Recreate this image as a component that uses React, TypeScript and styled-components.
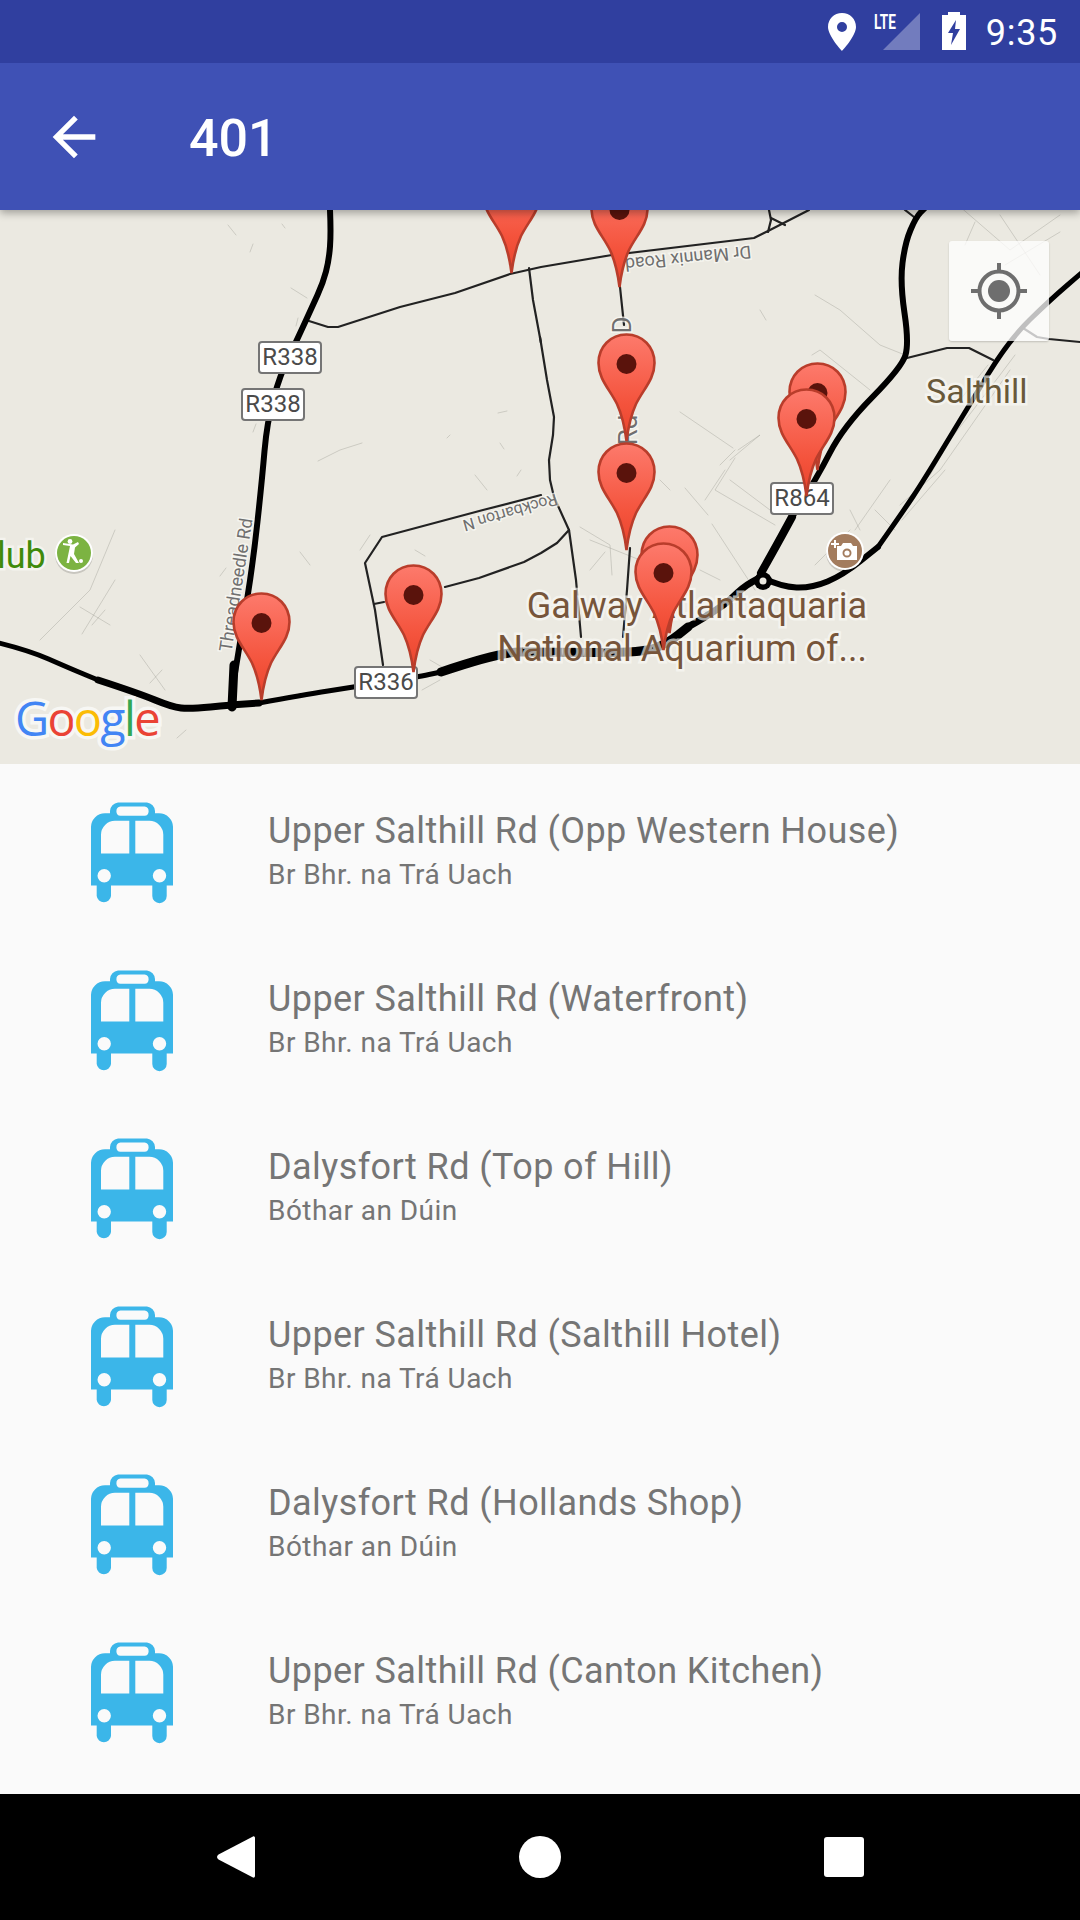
import React from 'react';
import styled, { createGlobalStyle } from 'styled-components';

const Global = createGlobalStyle`
  html, body { margin: 0; padding: 0; background: #fafafa; }
  body { font-family: Roboto, "Liberation Sans", sans-serif; }
  * { box-sizing: border-box; }
`;

const Screen = styled.div`
  width: 1080px; height: 1920px; display: flex; flex-direction: column; overflow: hidden; background: #fafafa;
`;
const StatusBar = styled.div`
  height: 63px; flex: none; background: #303f9f; display: flex; align-items: flex-start; justify-content: flex-end;
  padding: 12px 22px 0 0; color: #fff; position: relative; z-index: 3;
`;
const LocationIcon = styled.svg`width: 28px; height: 38px; margin: 1px 18px 0 0;`;
const SignalBox = styled.div`position: relative; width: 46px; height: 38px; margin: 1px 22px 0 0;`;
const SignalIcon = styled.svg`display: block; width: 46px; height: 38px;`;
const LteText = styled.span`
  position: absolute; left: 0; top: 1px; font: 700 20px/16px Roboto, sans-serif; color: #fff;
  transform: scaleX(.68); transform-origin: 0 0; letter-spacing: 0;
`;
const BatteryIcon = styled.svg`width: 24px; height: 38px; margin: 0 20px 0 0;`;
const Clock = styled.span`font: 400 36px/38px Roboto, sans-serif; margin-top: 2px; letter-spacing: .7px;`;

const AppBar = styled.header`
  height: 147px; flex: none; background: #3f51b5; display: flex; align-items: center; color: #fff;
  position: relative; z-index: 2; box-shadow: 0 3px 8px rgba(0,0,0,.32);
`;
const BackButton = styled.svg`width: 64px; height: 64px; margin-left: 42px; flex: none; fill: #fff;`;
const AppTitle = styled.h1`margin: 5px 0 0 83px; font: 500 52px/64px Roboto, sans-serif;`;

const MapView = styled.section`
  height: 554px; flex: none; position: relative; overflow: hidden; background: #ebe9e1;
`;
const Roads = styled.svg`position: absolute; left: 0; top: 0; width: 1080px; height: 554px;`;

const at = (p: { $x: number; $y: number }) => `left: ${p.$x}px; top: ${p.$y - 210}px;`;

const Shield = styled.div<{ $x: number; $y: number }>`
  position: absolute; ${at}; width: 64px; height: 33px; background: #fff; border: 2px solid #757575; border-radius: 4px;
  font: 400 24px/29px Roboto, sans-serif; color: #4a4a4a; text-align: center;
`;
const PlaceLabel = styled.div<{ $x: number; $y: number; $size: number; $color: string }>`
  position: absolute; ${at}; font: 400 ${p => p.$size}px/43px Roboto, sans-serif; color: ${p => p.$color};
  white-space: nowrap; -webkit-text-stroke: 5px rgba(250,249,245,.68); paint-order: stroke fill;
`;
const PoiBlock = styled.div`
  position: absolute; left: 467px; top: 375px; width: 400px; text-align: right;
  font: 400 36px/43px Roboto, sans-serif; color: #77553a; white-space: nowrap;
  -webkit-text-stroke: 5px rgba(250,249,245,.68); paint-order: stroke fill;
`;
const StreetLabel = styled.div<{ $x: number; $y: number; $rot: number; $size: number }>`
  position: absolute; ${at}; font: 400 ${p => p.$size}px/20px Roboto, sans-serif; color: #6f6f6f; white-space: nowrap;
  transform: translate(-50%, -50%) rotate(${p => p.$rot}deg);
  -webkit-text-stroke: 3px rgba(250,249,245,.7); paint-order: stroke fill;
`;
const PinSvg = styled.svg<{ $x: number; $y: number }>`
  position: absolute; ${at}; width: 59px; height: 108px; margin-left: -30.5px; overflow: visible;
`;
const PoiDot = styled.svg<{ $x: number; $y: number }>`
  position: absolute; ${at}; width: 40px; height: 42px;
`;
const GoogleLogo = styled.div`
  position: absolute; left: 15px; top: 480px; font: 500 47px/56px "Open Sans", Roboto, sans-serif; letter-spacing: -1.8px;
  -webkit-text-stroke: 7px rgba(250,250,248,.85); paint-order: stroke fill; white-space: nowrap;
`;
const Letter = styled.span<{ $c: string }>`color: ${p => p.$c};`;
const LocateButton = styled.button`
  position: absolute; right: 31px; top: 31px; width: 100px; height: 100px; padding: 0; border: 0; border-radius: 3px;
  background: rgba(255,255,255,.75); box-shadow: 0 1px 2px rgba(0,0,0,.18); display: flex; align-items: center; justify-content: center;
`;
const LocateIcon = styled.svg`width: 60px; height: 60px;`;

const StopList = styled.ul`flex: 1; margin: 0; padding: 0; list-style: none; overflow: hidden; background: #fafafa;`;
const StopRow = styled.li`
  height: 168px; display: flex; align-items: flex-start; padding: 38px 0 0 91px;
`;
const BusIcon = styled.svg`width: 82px; height: 102px; flex: none; fill: #3bb6e9; margin-right: 95px;`;
const StopText = styled.div`display: flex; flex-direction: column; margin-top: 7px;`;
const StopName = styled.span`font: 400 36px/44px Roboto, sans-serif; letter-spacing: .42px; color: #757575; white-space: nowrap;`;
const StopSub = styled.span`font: 400 28px/44px Roboto, sans-serif; letter-spacing: .45px; color: #757575; white-space: nowrap;`;

const NavBar = styled.nav`
  height: 126px; flex: none; background: #000; display: flex; align-items: center; justify-content: space-between;
  padding: 0 216px 0 217px;
`;
const NavBack = styled.svg`width: 38px; height: 42px; fill: #fff;`;
const NavHome = styled.div`width: 42px; height: 42px; border-radius: 50%; background: #fff;`;
const NavRecent = styled.div`width: 40px; height: 40px; border-radius: 3px; background: #fff;`;

const Pin = ({ x, top }: { x: number; top: number }) => (
  <PinSvg $x={x} $y={top} viewBox="0 0 59 108">
    <path
      d="M29.5 1.5C13.5 1.5 1.5 14 1.5 30C1.5 46 12.5 56 20 71C25.5 83 28 96 29.5 108C31 96 33.5 83 39 71C46.5 56 57.5 46 57.5 30C57.5 14 45.5 1.5 29.5 1.5Z"
      fill="url(#pinFill)" stroke="#b93d2b" strokeWidth="2.6"
    />
    <circle cx="29.5" cy="31" r="10" fill="#5a130c" />
  </PinSvg>
);

const stops = [
  ['Upper Salthill Rd (Opp Western House)', 'Br Bhr. na Trá Uach'],
  ['Upper Salthill Rd (Waterfront)', 'Br Bhr. na Trá Uach'],
  ['Dalysfort Rd (Top of Hill)', 'Bóthar an Dúin'],
  ['Upper Salthill Rd (Salthill Hotel)', 'Br Bhr. na Trá Uach'],
  ['Dalysfort Rd (Hollands Shop)', 'Bóthar an Dúin'],
  ['Upper Salthill Rd (Canton Kitchen)', 'Br Bhr. na Trá Uach'],
];

const thin = [
  '309,321 328,327 338,327 400,307 455,293 510,274 541,267 612,255 754,238 770,230 809,210',
  '769,210 771,220 768,232',
  '771,218 785,225',
  '905,210 914,217',
  '529,268 533,300 541,343',
  '540,337 547,380 554,417 553,435 549,460 550,480 554,497 569,530 576,580 581,637',
  '620,287 624,325',
  '630,548 627,590 623,637',
  '383,665 375,610 365,563 382,537 483,510 541,495',
  '374,604 384,602',
  '445,587 479,578 524,562 541,553 557,543 569,530',
  '907,358 947,348 969,348 993,360',
  '1023,328 1037,337 1049,339 1080,342',
];
const faint = [
  '228,225 236,235','282,224 285,228','253,244 250,252','291,288 307,298','298,318 296,326','220,576 226,568',
  '256,424 253,432','318,461 340,450 362,443','447,438 450,435','500,443 504,449','521,470 517,476',
  '498,413 507,411','760,310 766,320','815,295 840,310 880,345 905,355','812,355 820,350 870,390','735,450 720,465',
  '738,450 760,435 730,460','680,412 733,448','735,458 715,490 775,525','725,470 705,500','730,480 770,510',
  '1015,355 1000,375 950,440 930,475','988,365 960,400','1010,370 940,470 900,505','902,520 945,470','958,205 1010,250 1060,215',
  '1000,215 1040,275','1005,265 1060,232','975,222 965,245','40,640 90,590 115,530','82,634 115,580','92,625 105,610',
  '80,607 110,625','140,655 165,690','162,670 150,683','177,738 186,730','290,700 300,693','422,690 440,680',
  '300,552 310,565','370,535 360,550','425,556 415,550','430,660 442,667','487,490 475,475','670,490 660,480',
  '685,488 708,515','580,527 610,545 612,575','605,552 590,570','712,524 755,590','640,560 590,540','700,570 720,580',
  '855,530 890,480','850,510 860,530','895,530 875,510','815,565 850,530',
];

const smooth = (s: string) => {
  const p = s.split(' ').map(t => t.split(',').map(Number));
  let d = `M${p[0][0]} ${p[0][1]}`;
  for (let i = 1; i < p.length - 1; i++) {
    const mx = (p[i][0] + p[i + 1][0]) / 2;
    const my = (p[i][1] + p[i + 1][1]) / 2;
    d += `Q${p[i][0]} ${p[i][1]} ${mx} ${my}`;
  }
  const l = p[p.length - 1];
  return `${d}L${l[0]} ${l[1]}`;
};

const thick: [number, string][] = [
  [6, '330,210 331,233 329,260 323,283 312,307 297,340 280,375 267,422 262,480 253,563 241,637 235,673'],
  [9, '234,665 232,707'],
  [5, '-5,642 28,650 69,668 98,680'],
  [7, '98,680 138,693 172,707 190,709 231,705 259,703'],
  [5, '259,703 303,695 353,687 417,677 441,672'],
  [9, '441,672 500,652 540,652 643,653 668,643 688,627'],
  [7, '688,627 723,607 743,587 761,577'],
  [6, '761,577 781,587 812,588 843,575 878,547'],
  [5, '878,547 902,513 924,480 968,407 1009,340 1050,300 1085,270'],
  [8, '761,573 774,550 792,517'],
  [6, '792,517 816,480 843,427 902,367 909,343 900,283 905,243 916,217 925,208'],
];

export default function App() {
  return (
    <Screen>
      <Global />
      <StatusBar>
        <LocationIcon viewBox="0 0 28 38" fill="#fff">
          <path fillRule="evenodd" d="M14 0C6 0 0 6 0 14C0 23 14 38 14 38S28 23 28 14C28 6 22 0 14 0ZM14 9A5 5 0 1 1 14 19A5 5 0 1 1 14 9Z" />
        </LocationIcon>
        <SignalBox>
          <SignalIcon viewBox="0 0 46 38"><path d="M46 0V37H9Z" fill="#fff" fillOpacity=".32" /></SignalIcon>
          <LteText>LTE</LteText>
        </SignalBox>
        <BatteryIcon viewBox="0 0 24 38">
          <path fill="#fff" fillRule="evenodd" d="M6 0H18V3H24V38H0V3H6ZM14 8L6 21H11L9 33L18 17H13Z" />
        </BatteryIcon>
        <Clock>9:35</Clock>
      </StatusBar>
      <AppBar>
        <BackButton viewBox="0 0 24 24"><path d="M20 11H7.83l5.59-5.59L12 4l-8 8 8 8 1.41-1.41L7.83 13H20v-2z" /></BackButton>
        <AppTitle>401</AppTitle>
      </AppBar>
      <MapView>
        <Roads viewBox="0 210 1080 554" fill="none" strokeLinejoin="round" strokeLinecap="round">
          <defs>
            <linearGradient id="pinFill" x1="0" y1="0" x2="0" y2="1">
              <stop offset="0" stopColor="#fd7a6c" />
              <stop offset=".65" stopColor="#f4533c" />
              <stop offset="1" stopColor="#e8432c" />
            </linearGradient>
          </defs>
          {faint.map((p, i) => <polyline key={i} points={p} stroke="#8f8f88" strokeOpacity=".38" strokeWidth=".9" />)}
          {thin.map((p, i) => <polyline key={i} points={p} stroke="#222" strokeWidth="2.2" />)}
          {thick.map(([w, p], i) => <path key={i} d={smooth(p)} stroke="#000" strokeWidth={w} />)}
          <circle cx="763" cy="581" r="9" fill="#000" />
          <circle cx="763" cy="581" r="3.5" fill="#ebe9e1" />
        </Roads>

        <StreetLabel $x={688} $y={258} $rot={174} $size={18}>Dr Mannix Road</StreetLabel>
        <StreetLabel $x={510} $y={512} $rot={164} $size={16}>Rockbarton N</StreetLabel>
        <StreetLabel $x={236} $y={585} $rot={-81} $size={18}>Threadneedle Rd</StreetLabel>
        <StreetLabel $x={622} $y={325} $rot={-90} $size={26}>D</StreetLabel>
        <StreetLabel $x={628} $y={430} $rot={-90} $size={26}>Rd</StreetLabel>

        <Shield $x={258} $y={341}>R338</Shield>
        <Shield $x={241} $y={388}>R338</Shield>
        <Shield $x={354} $y={666}>R336</Shield>
        <Shield $x={770} $y={482}>R864</Shield>

        <PlaceLabel $x={-3} $y={535} $size={36} $color="#3f8a0a">lub</PlaceLabel>
        <PoiDot $x={54} $y={533} viewBox="0 0 40 42">
          <circle cx="20" cy="22" r="19" fill="#000" fillOpacity=".15" />
          <circle cx="20" cy="20" r="19" fill="#fff" />
          <circle cx="20" cy="20" r="17" fill="#7cb342" />
          <path fill="#fff" d="M9 10L19 11.5L24 9L25 11L21 14.5L20 21L25 30H22L16.5 23L15 30H12.5L15 18L16 13L9 12Z" />
          <circle cx="16" cy="8.5" r="2.4" fill="#fff" />
          <circle cx="27" cy="28" r="2" fill="#fff" />
        </PoiDot>
        <PoiDot $x={825} $y={531} viewBox="0 0 40 42">
          <circle cx="20" cy="22" r="19" fill="#000" fillOpacity=".15" />
          <circle cx="20" cy="20" r="19" fill="#fff" />
          <circle cx="20" cy="20" r="17" fill="#a37c5e" />
          <path fill="#fff" fillRule="evenodd" d="M12 15H16L18 12H26L28 15H32V29H12ZM22 17.5A4.5 4.5 0 1 0 22 26.5A4.5 4.5 0 1 0 22 17.5Z" />
          <path fill="#fff" d="M9 9H11V12H14V14H11V17H9V14H6V12H9Z" />
          <circle cx="22" cy="22" r="2.6" fill="#fff" />
        </PoiDot>

        <PlaceLabel $x={926} $y={370} $size={34} $color="#69593a">Salthill</PlaceLabel>
        <PoiBlock>Galway Atlantaquaria<br />National Aquarium of...</PoiBlock>

        <Pin x={512} top={165} />
        <Pin x={620} top={179} />
        <Pin x={627} top={333} />
        <Pin x={627} top={442} />
        <Pin x={818} top={362} />
        <Pin x={807} top={388} />
        <Pin x={670} top={525} />
        <Pin x={664} top={542} />
        <Pin x={262} top={592} />
        <Pin x={414.5} top={564} />

        <GoogleLogo>
          <Letter $c="#4285f4">G</Letter><Letter $c="#ea4335">o</Letter><Letter $c="#fbbc05">o</Letter>
          <Letter $c="#4285f4">g</Letter><Letter $c="#34a853">l</Letter><Letter $c="#ea4335">e</Letter>
        </GoogleLogo>
        <LocateButton aria-label="My location">
          <LocateIcon viewBox="0 0 60 60" fill="none" stroke="#6e6e6e">
            <circle cx="30" cy="30" r="19.5" strokeWidth="4" />
            <circle cx="30" cy="30" r="11" fill="#6e6e6e" stroke="none" />
            <path strokeWidth="4" d="M30 2V12M30 48V58M2 30H12M48 30H58" />
          </LocateIcon>
        </LocateButton>
      </MapView>
      <StopList>
        {stops.map(([name, sub], i) => (
          <StopRow key={i}>
            <BusIcon viewBox="0 0 82 101">
              <path fillRule="evenodd" d="M27 0H56A9 9 0 0 1 64 8.5V10.7H68A14 14 0 0 1 82 25V83H75.7V93.5A7.2 7.2 0 0 1 61.3 93.5V83H20V93.5A7.2 7.2 0 0 1 5.7 93.5V83H0V25A14 14 0 0 1 14 10.7H19V8.5A9 9 0 0 1 27 0ZM29.4 4A4.7 4.7 0 0 0 29.4 13.3H53.6A4.7 4.7 0 0 0 53.6 4ZM38.3 18.3H24A14 14 0 0 0 10 32.3V51H38.3ZM44.3 18.3V51H72.3V32.3A14 14 0 0 0 58.3 18.3ZM13.2 66.6A6.7 6.7 0 1 0 13.2 80A6.7 6.7 0 1 0 13.2 66.6ZM68.5 66.6A6.7 6.7 0 1 0 68.5 80A6.7 6.7 0 1 0 68.5 66.6Z" />
            </BusIcon>
            <StopText>
              <StopName>{name}</StopName>
              <StopSub>{sub}</StopSub>
            </StopText>
          </StopRow>
        ))}
      </StopList>
      <NavBar>
        <NavBack viewBox="0 0 38 42"><path d="M36 0.5C37.2 0 38 1 38 2V40C38 41 37.2 42 36 41.5L1.5 23.5C-0.5 22 -0.5 20 1.5 18.5Z" /></NavBack>
        <NavHome />
        <NavRecent />
      </NavBar>
    </Screen>
  );
}
